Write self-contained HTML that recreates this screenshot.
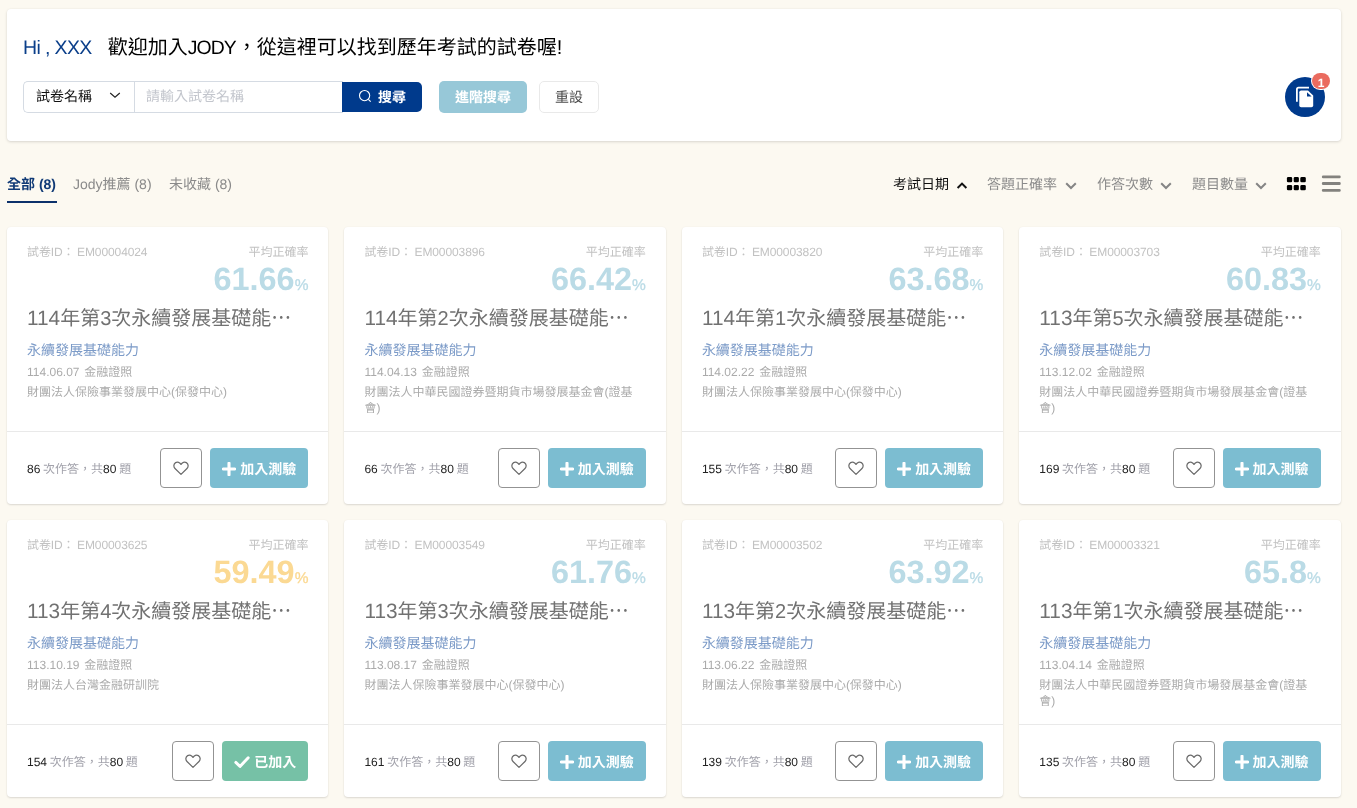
<!DOCTYPE html>
<html lang="zh-Hant">
<head>
<meta charset="utf-8">
<title>JODY</title>
<style>
*{box-sizing:border-box;margin:0;padding:0}
html,body{width:1357px;height:808px;overflow:hidden}
body{background:#fcf9f1;font-family:"Liberation Sans","Noto Sans CJK TC",sans-serif;font-size:14px;color:#333;position:relative;will-change:transform;text-rendering:geometricPrecision}
.top{position:absolute;left:7px;top:9px;width:1334px;height:132px;background:#fff;border-radius:4px;box-shadow:0 1px 3px rgba(0,0,0,.14),0 0 2px rgba(0,0,0,.05)}
.hello{position:absolute;left:16px;top:24px;font-size:20px;line-height:30px;white-space:nowrap;color:#000}
.hello .hi{color:#0b3f8a;font-size:19.5px;letter-spacing:-.62px;margin-right:10.5px}
.hello .j{font-size:19.4px;letter-spacing:-.95px;margin-right:.95px}
.sel{position:absolute;left:16px;top:72px;width:112px;height:32px;border:1px solid #d5dbe3;border-right:0;border-radius:5px 0 0 5px;background:#fff;font-size:14px;line-height:28px;padding-left:12px;color:#111}
.sel svg{position:absolute;left:85px;top:7.5px}
.inp{position:absolute;left:127px;top:72px;width:209px;height:32px;border:1px solid #d5dbe3;border-right:0;background:#fff;font-size:14px;line-height:28px;padding-left:11px;color:#c3c6cd}
.btn{position:absolute;top:72px;height:32px;font-size:14px;line-height:32px;text-align:center;white-space:nowrap}
.b1{left:335px;top:72.5px;height:30.5px;line-height:30.5px;width:80px;background:#003a8c;color:#fff;border-radius:0 5px 5px 0;font-weight:700;text-align:left;padding-left:36px}
.b1 svg{position:absolute;left:16px;top:7px}
.b2{left:432px;width:88px;background:#97c8d8;color:#fff;border-radius:5px;font-weight:700}
.b3{left:532px;width:60px;background:#fff;color:#4a4a4a;border:1px solid #e9e9e9;border-radius:5px;line-height:31px}
.fab{position:absolute;left:1285px;top:77px;width:40px;height:40px;border-radius:50%;background:#003a8c}
.fab svg{position:absolute;left:10px;top:9px}
.badge{position:absolute;left:1311.7px;top:73px;width:18.6px;height:15.8px;border-radius:8px;background:#ea6b5f;color:#fff;font-size:12px;line-height:20px;text-align:center;font-weight:700;box-shadow:0 0 0 1px #fff}
.tabs{position:absolute;left:7px;top:172px;font-size:14px;line-height:24px;white-space:nowrap;color:#8a8a8a}
.tabs span{position:absolute;top:0}
.tabs .on{color:#103a76;font-weight:700}
.uline{position:absolute;left:7px;top:201px;width:50px;height:2px;background:#0c316b}
.sort{position:absolute;top:172px;font-size:14px;line-height:24px;color:#8a8a8a;white-space:nowrap}
.sort.on{color:#111}
.sort svg{position:absolute;top:9px}
.grid{position:absolute;left:7px;top:227px;width:1334px;display:grid;grid-template-columns:repeat(4,321.45px);column-gap:16px;row-gap:16px}
.card{position:relative;height:277px;background:#fff;border-radius:4px;box-shadow:0 1px 2px rgba(0,0,0,.13),0 0 2px rgba(0,0,0,.06)}
.card>div{position:absolute;white-space:nowrap}
.card .id{left:20px;top:16px;font-size:12px;line-height:18px;color:#c2c2c2;word-spacing:-.7px;letter-spacing:-.1px}
.card .avg{right:20px;top:16px;font-size:12px;line-height:18px;color:#c2c2c2}
.card .pct{right:20px;top:32px;font-size:32.4px;line-height:40px;font-weight:700;color:#badbe6}
.card .pct small{font-size:15.5px;font-weight:400;-webkit-text-stroke:.3px currentColor}
.card .pct.y{color:#fbd993}
.card .ttl{left:20px;top:75px;font-size:20px;line-height:30px;color:#717171}
.ttl .n{font-size:20.8px}
.el{font-family:"Noto Sans CJK TC",sans-serif}
.card .cat{left:20px;top:113px;font-size:14px;line-height:20px;color:#7c9bc8}
.card .dt{left:20px;top:136px;font-size:12px;line-height:18px;color:#ababab;word-spacing:1.5px}
.card .org{left:20px;top:157px;width:282px;font-size:12px;line-height:16px;color:#ababab;white-space:normal}
.card .hr{left:0;top:204px;width:100%;height:1px;background:#e9e9e9}
.card .cnt{left:20px;top:233px;font-size:12px;line-height:18px;color:#a2a2ab;word-spacing:-.6px}
.card .cnt b{font-weight:400;color:#222}
.card .fav{right:126.2px;top:221px;width:42px;height:40px;border:1px solid #939393;border-radius:4px;background:#fff}
.card .fav.s{right:114.2px}
.fav svg{position:absolute;left:11px;top:11px}
.card .add{right:20.2px;top:221px;width:98px;height:40px;border-radius:4px;background:#7cbdd1;color:#fff;font-size:14px;line-height:40px;font-weight:700;padding-left:12px}
.card .add.done{background:#76c1a6;width:86px}
.add svg{position:absolute;left:12px;top:14px}
.add span{position:absolute;left:30px;top:1px}
.add.done span{left:32px}
</style>
</head>
<body>
<div class="top">
  <div class="hello"><span class="hi">Hi , XXX</span> 歡迎加入<span class="j">JODY</span>，從這裡可以找到歷年考試的試卷喔!</div>
  <div class="sel">試卷名稱<svg width="12" height="12" viewBox="0 0 12 12"><path d="M1.2 3 L6 7.3 L10.8 3" fill="none" stroke="#222" stroke-width="1.15"/></svg></div>
  <div class="inp">請輸入試卷名稱</div>
  <div class="btn b1"><svg width="15" height="15" viewBox="0 0 15 15"><circle cx="6.6" cy="6.6" r="5.1" fill="none" stroke="#fff" stroke-width="1.1"/><path d="M10.3 10.3 L12.7 12.7" stroke="#fff" stroke-width="1.1"/></svg>搜尋</div>
  <div class="btn b2">進階搜尋</div>
  <div class="btn b3">重設</div>
</div>
<div class="fab"><svg width="20" height="23" viewBox="0 0 20 23"><path d="M1.9 15.8 V3.3 Q1.9 1.7 3.5 1.7 H14" fill="none" stroke="#fff" stroke-width="1.8"/><path d="M6.1 4.5 H13 L18.2 9.6 V19.5 Q18.2 21.3 16.4 21.3 H6.1 Q4.3 21.3 4.3 19.5 V6.3 Q4.3 4.5 6.1 4.5 Z" fill="#fff"/><path d="M12 6.2 V10.6 H16.6 Z" fill="#003a8c"/></svg></div>
<div class="badge">1</div>

<div class="tabs"><span class="on" style="left:0">全部 (8)</span><span style="left:66px">Jody推薦 (8)</span><span style="left:162px">未收藏 (8)</span></div>
<div class="uline"></div>

<div class="sort on" style="left:893px">考試日期<svg style="left:63px" width="12" height="10" viewBox="0 0 12 10"><path d="M1.6 7 L6 2.6 L10.4 7" fill="none" stroke="#111" stroke-width="2"/></svg></div>
<div class="sort" style="left:987px">答題正確率<svg style="left:78px" width="12" height="10" viewBox="0 0 12 10"><path d="M1.2 2.2 L6 7 L10.8 2.2" fill="none" stroke="#858585" stroke-width="2"/></svg></div>
<div class="sort" style="left:1097px">作答次數<svg style="left:63px" width="12" height="10" viewBox="0 0 12 10"><path d="M1.2 2.2 L6 7 L10.8 2.2" fill="none" stroke="#858585" stroke-width="2"/></svg></div>
<div class="sort" style="left:1192px">題目數量<svg style="left:63px" width="12" height="10" viewBox="0 0 12 10"><path d="M1.2 2.2 L6 7 L10.8 2.2" fill="none" stroke="#858585" stroke-width="2"/></svg></div>
<svg style="position:absolute;left:1286px;top:176px" width="21" height="16" viewBox="0 0 21 16"><g fill="#000"><rect x="0.9" y="1.1" width="5.3" height="5.2" rx="1.3"/><rect x="7.7" y="1.1" width="5.2" height="5.2" rx="1.3"/><rect x="14.3" y="1.1" width="5.5" height="5.2" rx="1.3"/><rect x="0.9" y="9.1" width="5.3" height="5.2" rx="1.3"/><rect x="7.7" y="9.1" width="5.2" height="5.2" rx="1.3"/><rect x="14.3" y="9.1" width="5.5" height="5.2" rx="1.3"/></g></svg>
<svg style="position:absolute;left:1321px;top:174px" width="21" height="19" viewBox="0 0 21 19"><g fill="#83827e"><rect x="0.9" y="1.5" width="18.8" height="2.8" rx="1.2"/><rect x="0.9" y="8.1" width="18.8" height="2.8" rx="1.2"/><rect x="0.9" y="14.9" width="18.8" height="2.8" rx="1.2"/></g></svg>

<div class="grid">
<div class="card">
  <div class="id">試卷ID： EM00004024</div><div class="avg">平均正確率</div>
  <div class="pct">61.66<small>%</small></div>
  <div class="ttl"><span class="n">114</span>年第3次永續發展基礎能<span class="el">…</span></div>
  <div class="cat">永續發展基礎能力</div>
  <div class="dt">114.06.07 金融證照</div>
  <div class="org">財團法人保險事業發展中心(保發中心)</div>
  <div class="hr"></div>
  <div class="cnt"><b>86</b> 次作答，共<b>80</b> 題</div>
  <div class="fav"><svg class="hrt" width="18" height="16" viewBox="0 0 18 16"><path d="M9 14.4 L3 8.5 C1.3 6.8 1.5 3.9 3.6 2.6 C5.5 1.5 7.9 2.3 9 4.4 C10.1 2.3 12.5 1.5 14.4 2.6 C16.5 3.9 16.7 6.8 15 8.5 Z" fill="none" stroke="#6b6b6b" stroke-width="1.25" stroke-linejoin="round"/></svg></div><div class="add"><svg class="ic" width="14" height="14" viewBox="0 0 14 14"><path d="M7 1.2V12.8M1.2 7H12.8" stroke="#fff" stroke-width="3.1" stroke-linecap="round" fill="none"/></svg><span>加入測驗</span></div>
</div>
<div class="card">
  <div class="id">試卷ID： EM00003896</div><div class="avg">平均正確率</div>
  <div class="pct">66.42<small>%</small></div>
  <div class="ttl"><span class="n">114</span>年第2次永續發展基礎能<span class="el">…</span></div>
  <div class="cat">永續發展基礎能力</div>
  <div class="dt">114.04.13 金融證照</div>
  <div class="org">財團法人中華民國證券暨期貨市場發展基金會(證基會)</div>
  <div class="hr"></div>
  <div class="cnt"><b>66</b> 次作答，共<b>80</b> 題</div>
  <div class="fav"><svg class="hrt" width="18" height="16" viewBox="0 0 18 16"><path d="M9 14.4 L3 8.5 C1.3 6.8 1.5 3.9 3.6 2.6 C5.5 1.5 7.9 2.3 9 4.4 C10.1 2.3 12.5 1.5 14.4 2.6 C16.5 3.9 16.7 6.8 15 8.5 Z" fill="none" stroke="#6b6b6b" stroke-width="1.25" stroke-linejoin="round"/></svg></div><div class="add"><svg class="ic" width="14" height="14" viewBox="0 0 14 14"><path d="M7 1.2V12.8M1.2 7H12.8" stroke="#fff" stroke-width="3.1" stroke-linecap="round" fill="none"/></svg><span>加入測驗</span></div>
</div>
<div class="card">
  <div class="id">試卷ID： EM00003820</div><div class="avg">平均正確率</div>
  <div class="pct">63.68<small>%</small></div>
  <div class="ttl"><span class="n">114</span>年第1次永續發展基礎能<span class="el">…</span></div>
  <div class="cat">永續發展基礎能力</div>
  <div class="dt">114.02.22 金融證照</div>
  <div class="org">財團法人保險事業發展中心(保發中心)</div>
  <div class="hr"></div>
  <div class="cnt"><b>155</b> 次作答，共<b>80</b> 題</div>
  <div class="fav"><svg class="hrt" width="18" height="16" viewBox="0 0 18 16"><path d="M9 14.4 L3 8.5 C1.3 6.8 1.5 3.9 3.6 2.6 C5.5 1.5 7.9 2.3 9 4.4 C10.1 2.3 12.5 1.5 14.4 2.6 C16.5 3.9 16.7 6.8 15 8.5 Z" fill="none" stroke="#6b6b6b" stroke-width="1.25" stroke-linejoin="round"/></svg></div><div class="add"><svg class="ic" width="14" height="14" viewBox="0 0 14 14"><path d="M7 1.2V12.8M1.2 7H12.8" stroke="#fff" stroke-width="3.1" stroke-linecap="round" fill="none"/></svg><span>加入測驗</span></div>
</div>
<div class="card">
  <div class="id">試卷ID： EM00003703</div><div class="avg">平均正確率</div>
  <div class="pct">60.83<small>%</small></div>
  <div class="ttl"><span class="n">113</span>年第5次永續發展基礎能<span class="el">…</span></div>
  <div class="cat">永續發展基礎能力</div>
  <div class="dt">113.12.02 金融證照</div>
  <div class="org">財團法人中華民國證券暨期貨市場發展基金會(證基會)</div>
  <div class="hr"></div>
  <div class="cnt"><b>169</b> 次作答，共<b>80</b> 題</div>
  <div class="fav"><svg class="hrt" width="18" height="16" viewBox="0 0 18 16"><path d="M9 14.4 L3 8.5 C1.3 6.8 1.5 3.9 3.6 2.6 C5.5 1.5 7.9 2.3 9 4.4 C10.1 2.3 12.5 1.5 14.4 2.6 C16.5 3.9 16.7 6.8 15 8.5 Z" fill="none" stroke="#6b6b6b" stroke-width="1.25" stroke-linejoin="round"/></svg></div><div class="add"><svg class="ic" width="14" height="14" viewBox="0 0 14 14"><path d="M7 1.2V12.8M1.2 7H12.8" stroke="#fff" stroke-width="3.1" stroke-linecap="round" fill="none"/></svg><span>加入測驗</span></div>
</div>
<div class="card">
  <div class="id">試卷ID： EM00003625</div><div class="avg">平均正確率</div>
  <div class="pct y">59.49<small>%</small></div>
  <div class="ttl"><span class="n">113</span>年第4次永續發展基礎能<span class="el">…</span></div>
  <div class="cat">永續發展基礎能力</div>
  <div class="dt">113.10.19 金融證照</div>
  <div class="org">財團法人台灣金融研訓院</div>
  <div class="hr"></div>
  <div class="cnt"><b>154</b> 次作答，共<b>80</b> 題</div>
  <div class="fav s"><svg class="hrt" width="18" height="16" viewBox="0 0 18 16"><path d="M9 14.4 L3 8.5 C1.3 6.8 1.5 3.9 3.6 2.6 C5.5 1.5 7.9 2.3 9 4.4 C10.1 2.3 12.5 1.5 14.4 2.6 C16.5 3.9 16.7 6.8 15 8.5 Z" fill="none" stroke="#6b6b6b" stroke-width="1.25" stroke-linejoin="round"/></svg></div><div class="add done"><svg class="ic" width="16" height="14" viewBox="0 0 16 14"><path d="M1.8 7.4L6 11.4L14.2 2.8" stroke="#fff" stroke-width="2.9" stroke-linecap="round" stroke-linejoin="round" fill="none"/></svg><span>已加入</span></div>
</div>
<div class="card">
  <div class="id">試卷ID： EM00003549</div><div class="avg">平均正確率</div>
  <div class="pct">61.76<small>%</small></div>
  <div class="ttl"><span class="n">113</span>年第3次永續發展基礎能<span class="el">…</span></div>
  <div class="cat">永續發展基礎能力</div>
  <div class="dt">113.08.17 金融證照</div>
  <div class="org">財團法人保險事業發展中心(保發中心)</div>
  <div class="hr"></div>
  <div class="cnt"><b>161</b> 次作答，共<b>80</b> 題</div>
  <div class="fav"><svg class="hrt" width="18" height="16" viewBox="0 0 18 16"><path d="M9 14.4 L3 8.5 C1.3 6.8 1.5 3.9 3.6 2.6 C5.5 1.5 7.9 2.3 9 4.4 C10.1 2.3 12.5 1.5 14.4 2.6 C16.5 3.9 16.7 6.8 15 8.5 Z" fill="none" stroke="#6b6b6b" stroke-width="1.25" stroke-linejoin="round"/></svg></div><div class="add"><svg class="ic" width="14" height="14" viewBox="0 0 14 14"><path d="M7 1.2V12.8M1.2 7H12.8" stroke="#fff" stroke-width="3.1" stroke-linecap="round" fill="none"/></svg><span>加入測驗</span></div>
</div>
<div class="card">
  <div class="id">試卷ID： EM00003502</div><div class="avg">平均正確率</div>
  <div class="pct">63.92<small>%</small></div>
  <div class="ttl"><span class="n">113</span>年第2次永續發展基礎能<span class="el">…</span></div>
  <div class="cat">永續發展基礎能力</div>
  <div class="dt">113.06.22 金融證照</div>
  <div class="org">財團法人保險事業發展中心(保發中心)</div>
  <div class="hr"></div>
  <div class="cnt"><b>139</b> 次作答，共<b>80</b> 題</div>
  <div class="fav"><svg class="hrt" width="18" height="16" viewBox="0 0 18 16"><path d="M9 14.4 L3 8.5 C1.3 6.8 1.5 3.9 3.6 2.6 C5.5 1.5 7.9 2.3 9 4.4 C10.1 2.3 12.5 1.5 14.4 2.6 C16.5 3.9 16.7 6.8 15 8.5 Z" fill="none" stroke="#6b6b6b" stroke-width="1.25" stroke-linejoin="round"/></svg></div><div class="add"><svg class="ic" width="14" height="14" viewBox="0 0 14 14"><path d="M7 1.2V12.8M1.2 7H12.8" stroke="#fff" stroke-width="3.1" stroke-linecap="round" fill="none"/></svg><span>加入測驗</span></div>
</div>
<div class="card">
  <div class="id">試卷ID： EM00003321</div><div class="avg">平均正確率</div>
  <div class="pct">65.8<small>%</small></div>
  <div class="ttl"><span class="n">113</span>年第1次永續發展基礎能<span class="el">…</span></div>
  <div class="cat">永續發展基礎能力</div>
  <div class="dt">113.04.14 金融證照</div>
  <div class="org">財團法人中華民國證券暨期貨市場發展基金會(證基會)</div>
  <div class="hr"></div>
  <div class="cnt"><b>135</b> 次作答，共<b>80</b> 題</div>
  <div class="fav"><svg class="hrt" width="18" height="16" viewBox="0 0 18 16"><path d="M9 14.4 L3 8.5 C1.3 6.8 1.5 3.9 3.6 2.6 C5.5 1.5 7.9 2.3 9 4.4 C10.1 2.3 12.5 1.5 14.4 2.6 C16.5 3.9 16.7 6.8 15 8.5 Z" fill="none" stroke="#6b6b6b" stroke-width="1.25" stroke-linejoin="round"/></svg></div><div class="add"><svg class="ic" width="14" height="14" viewBox="0 0 14 14"><path d="M7 1.2V12.8M1.2 7H12.8" stroke="#fff" stroke-width="3.1" stroke-linecap="round" fill="none"/></svg><span>加入測驗</span></div>
</div></div>
</body>
</html>
